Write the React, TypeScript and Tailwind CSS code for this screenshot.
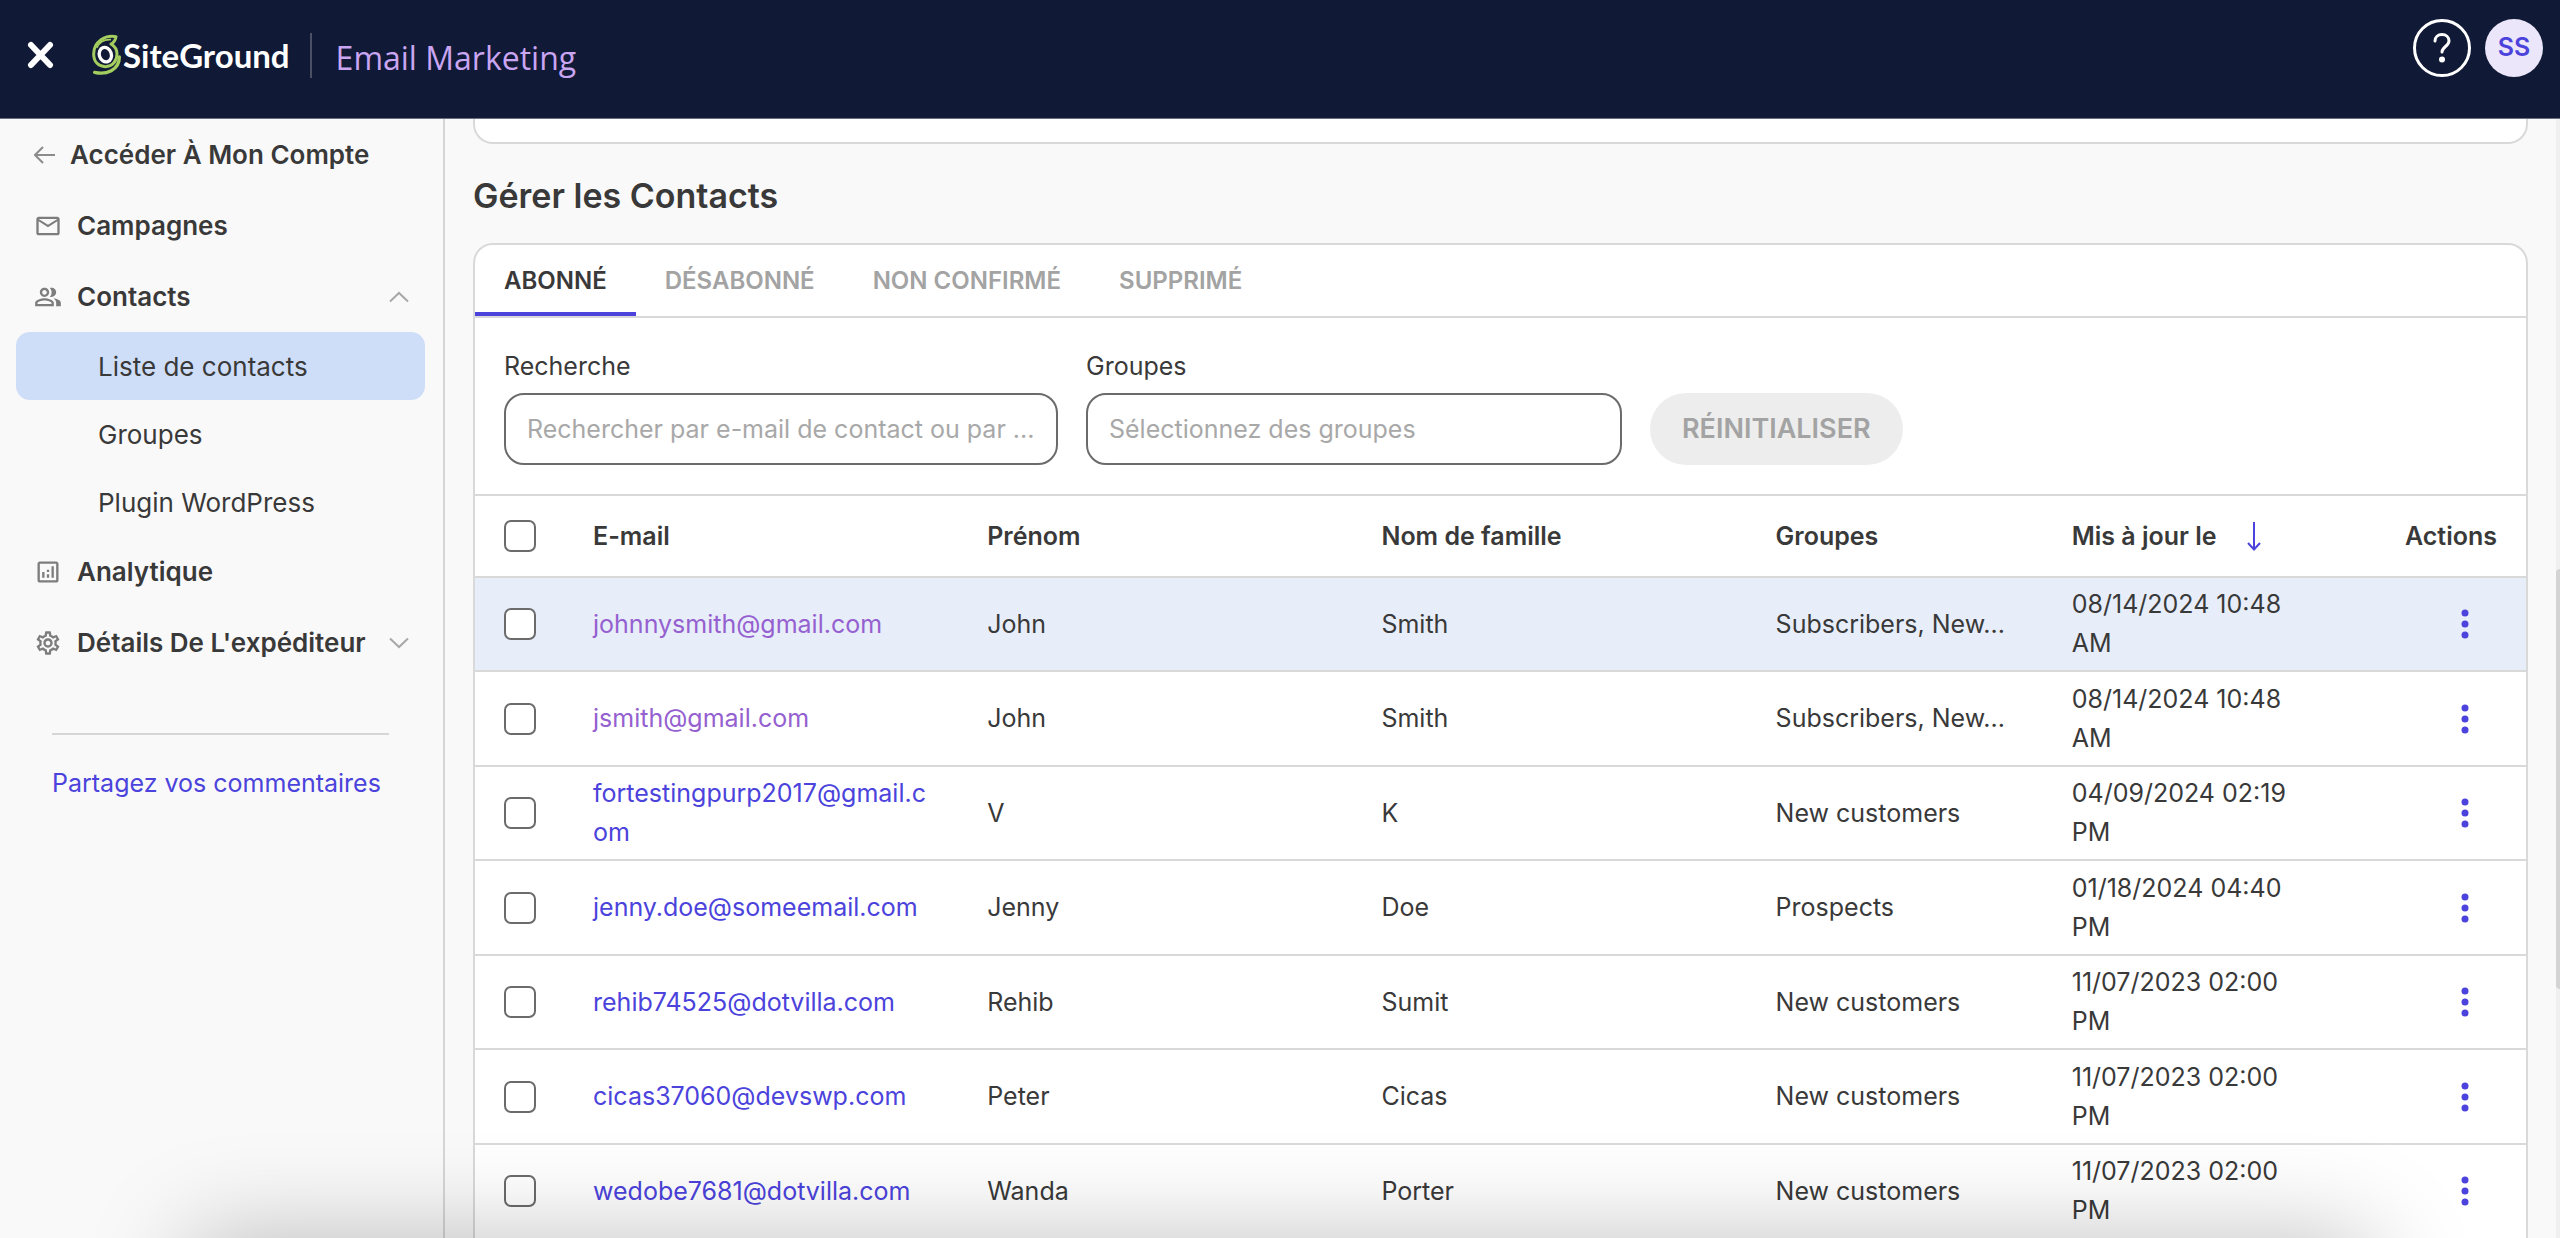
import {
  MdMailOutline,
  MdOutlineAnalytics,
  MdOutlinePeopleAlt,
  MdOutlineSettings,
} from 'react-icons/md';

type Contact = {
  email: string;
  first: string;
  last: string;
  groups: string;
  updated: string;
  visited?: boolean;
};

const contacts: Contact[] = [
  { email: 'johnnysmith@gmail.com', first: 'John', last: 'Smith', groups: 'Subscribers, New...', updated: '08/14/2024 10:48 AM', visited: true },
  { email: 'jsmith@gmail.com', first: 'John', last: 'Smith', groups: 'Subscribers, New...', updated: '08/14/2024 10:48 AM', visited: true },
  { email: 'fortestingpurp2017@gmail.com', first: 'V', last: 'K', groups: 'New customers', updated: '04/09/2024 02:19 PM' },
  { email: 'jenny.doe@someemail.com', first: 'Jenny', last: 'Doe', groups: 'Prospects', updated: '01/18/2024 04:40 PM' },
  { email: 'rehib74525@dotvilla.com', first: 'Rehib', last: 'Sumit', groups: 'New customers', updated: '11/07/2023 02:00 PM' },
  { email: 'cicas37060@devswp.com', first: 'Peter', last: 'Cicas', groups: 'New customers', updated: '11/07/2023 02:00 PM' },
  { email: 'wedobe7681@dotvilla.com', first: 'Wanda', last: 'Porter', groups: 'New customers', updated: '11/07/2023 02:00 PM' },
];

const tabs = ['ABONNÉ', 'DÉSABONNÉ', 'NON CONFIRMÉ', 'SUPPRIMÉ'];

function Chevron({ up }: { up?: boolean }) {
  return (
    <svg width="20" height="12" viewBox="0 0 20 12" fill="none" stroke="#a8a8a8" strokeWidth="2" aria-hidden>
      <path d={up ? 'M1 10.5 10 2l9 8.5' : 'M1 1.5 10 10l9-8.5'} />
    </svg>
  );
}

function Swirl() {
  return (
    <svg width="30" height="42" viewBox="0 0 90 126" fill="none" strokeLinecap="round" strokeLinejoin="round" aria-hidden>
      <path d="M75 8C42 2 8 24 8 60c0 24 15 38 35 38 22 0 35-18 35-38 0-14-8-24-18-30 8-4 13-11 15-22Z" stroke="#a4cd5f" strokeWidth="9" />
      <path d="M18 40C26 24 40 16 58 17" stroke="#a4cd5f" strokeWidth="5" />
      <ellipse cx="43" cy="62" rx="18" ry="22" stroke="#fff" strokeWidth="10" transform="rotate(-18 43 62)" />
      <path d="M11 115c34 8 74-6 74-46" stroke="#a4cd5f" strokeWidth="10" />
    </svg>
  );
}

function Header() {
  return (
    <header className="flex h-[119px] shrink-0 items-start justify-between border-b border-[#6b6f7d] bg-[#101936] pr-[17px] pl-[26px]">
      <div className="flex h-[110px] items-center">
        <button aria-label="Fermer" className="mr-[36px]">
          <svg width="29" height="28" viewBox="0 0 29 28" stroke="#fff" strokeWidth="6" strokeLinecap="round" aria-hidden>
            <path d="M5 4l19 20M24 4 5 24" />
          </svg>
        </button>
        <a href="#" className="flex items-center gap-[2px] font-['Lato'] text-[33px] leading-[42px] font-bold text-white">
          <Swirl />
          SiteGround
        </a>
        <div className="mr-[24px] ml-[20px] h-[45px] w-[2px] bg-[#4b5064]" />
        <span className="pt-[6px] font-['Open_Sans'] text-[32px] leading-[44px] text-[#c9a5f2]">Email Marketing</span>
      </div>
      <div className="flex gap-[14px] pt-[19px]">
        <button aria-label="Aide" className="flex size-[58px] items-center justify-center rounded-full border-[3px] border-white">
          <svg width="18" height="30" viewBox="0 0 18 30" fill="none" stroke="#fff" strokeWidth="3" strokeLinecap="round" aria-hidden>
            <path d="M2 8c0-4 3-6.500 7-6.500s7 2.500 7 6.500c0 5-7 6-7 11" />
            <circle cx="9" cy="26.500" r="3" fill="#fff" stroke="none" />
          </svg>
        </button>
        <button className="size-[58px] rounded-full bg-[#ebe6fa] text-[25px] font-semibold text-[#4b43dc]">SS</button>
      </div>
    </header>
  );
}

function Sidebar() {
  const item = 'flex h-[71px] w-full items-center gap-[15px] pl-[18px] pr-[16px] text-[26px] font-semibold';
  const sub = 'flex h-[68px] items-center rounded-[14px] pl-[82px] text-[26px]';
  return (
    <nav className="w-[445px] shrink-0 border-r-2 border-[#d6d6d6] pr-[18px] pl-4">
      <a href="#" className={item}>
        <svg width="21" height="18" viewBox="0 0 21 18" fill="none" stroke="#8c8c8c" strokeWidth="2" aria-hidden>
          <path d="M21 9H1M9 1 1 9l8 8" />
        </svg>
        Accéder À Mon Compte
      </a>
      <a href="#" className={item}>
        <MdMailOutline className="size-[28px] text-[#7d7d7d]" />
        Campagnes
      </a>
      <button className={item}>
        <MdOutlinePeopleAlt className="size-[28px] text-[#7d7d7d]" />
        <span className="grow text-left">Contacts</span>
        <Chevron up />
      </button>
      <div>
        <a href="#" className={sub + ' bg-[#cfdef8]'}>Liste de contacts</a>
        <a href="#" className={sub}>Groupes</a>
        <a href="#" className={sub}>Plugin WordPress</a>
      </div>
      <a href="#" className={item}>
        <MdOutlineAnalytics className="size-[28px] text-[#7d7d7d]" />
        Analytique
      </a>
      <button className={item}>
        <MdOutlineSettings className="size-[28px] text-[#7d7d7d]" />
        <span className="grow text-left">Détails De L'expéditeur</span>
        <Chevron />
      </button>
      <hr className="mt-[55px] mr-[36px] ml-[36px] border-t-2 border-[#d6d6d6]" />
      <a href="#" className="mt-[29px] ml-[36px] block text-[25px] leading-[39px] text-[#4b43dc]">Partagez vos commentaires</a>
    </nav>
  );
}

function CheckBox({ label }: { label: string }) {
  return (
    <input
      type="checkbox"
      aria-label={label}
      className="block size-[32px] appearance-none rounded-[7px] border-2 border-[#6b6b6b] bg-white"
    />
  );
}

function ContactTable() {
  const th = 'border-t-2 border-[#d9d9d9] px-[29px] py-0 text-left font-semibold';
  const td = 'border-t-2 border-[#d9d9d9] px-[29px] py-0';
  return (
    <table className="w-full table-fixed border-separate border-spacing-0 text-[25px] leading-[39px]">
      <colgroup>
        <col className="w-[89px]" />
        <col className="w-[394px]" />
        <col className="w-[394px]" />
        <col className="w-[394px]" />
        <col className="w-[296px]" />
        <col className="w-[296px]" />
        <col className="w-[187px]" />
      </colgroup>
      <thead>
        <tr className="h-[82px]">
          <th className={th}><CheckBox label="Tout sélectionner" /></th>
          <th className={th}>E-mail</th>
          <th className={th}>Prénom</th>
          <th className={th}>Nom de famille</th>
          <th className={th}>Groupes</th>
          <th className={th}>
            <button className="flex items-center gap-[30px] whitespace-nowrap">
              Mis à jour le
              <svg width="14" height="30" viewBox="0 0 14 30" fill="none" stroke="#4b43dc" strokeWidth="2" aria-hidden>
                <path d="M7 1v27M1 22l6 6.500 6-6.500" />
              </svg>
            </button>
          </th>
          <th className={th}><div className="flex justify-end">Actions</div></th>
        </tr>
      </thead>
      <tbody>
        {contacts.map((c, i) => (
          <tr key={c.email} className={i === 0 ? 'h-[94px] bg-[#e8eef9]' : 'h-[95px] odd:h-[94px]'}>
            <td className={td}><CheckBox label={c.email} /></td>
            <td className={td}>
              <a href="#" className={c.visited ? 'break-all text-[#9560d0]' : 'break-all text-[#4b43dc]'}>{c.email}</a>
            </td>
            <td className={td}>{c.first}</td>
            <td className={td}>{c.last}</td>
            <td className={td}>{c.groups}</td>
            <td className={td}>{c.updated}</td>
            <td className={td}>
              <button aria-label="Actions" className="ml-auto flex h-[40px] w-[64px] items-center justify-center">
                <svg width="8" height="30" viewBox="0 0 8 30" fill="#4b43dc" aria-hidden>
                  <circle cx="4" cy="4" r="3.500" />
                  <circle cx="4" cy="15" r="3.500" />
                  <circle cx="4" cy="26" r="3.500" />
                </svg>
              </button>
            </td>
          </tr>
        ))}
      </tbody>
    </table>
  );
}

export default function App() {
  const field = 'h-[72px] rounded-[20px] border-2 border-[#6b6b6b] bg-white px-[21px] placeholder:text-[#a8a8a8]';
  return (
    <div className="relative flex h-screen flex-col overflow-hidden bg-[#f9f9f9] font-['Inter',sans-serif] text-[#393939]">
      <Header />
      <div className="flex min-h-0 grow">
        <Sidebar />
        <main className="min-w-0 grow overflow-hidden pr-[32px] pl-[28px]">
          <div className="h-[25px] rounded-b-[20px] border-2 border-t-0 border-[#d9d9d9] bg-white" />
          <h1 className="mt-[31px] mb-[26px] text-[34px] leading-[42px] font-semibold">Gérer les Contacts</h1>
          <section className="overflow-hidden rounded-[20px] border-2 border-[#d9d9d9] bg-white pb-10">
            <div role="tablist" className="flex border-b-2 border-[#d9d9d9]">
              {tabs.map((t, i) => (
                <button
                  key={t}
                  role="tab"
                  aria-selected={i === 0}
                  className={
                    i === 0
                      ? 'h-[71px] border-y-4 border-t-transparent border-b-[#4b43dc] px-[29px] text-[24px] font-semibold'
                      : 'h-[71px] px-[29px] text-[24px] font-semibold text-[#a3a3a3]'
                  }
                >
                  {t}
                </button>
              ))}
            </div>
            <div className="flex items-end gap-[28px] px-[29px] pt-[29px] pb-[29px] text-[25px]">
              <div className="flex w-[554px] flex-col gap-[7px]">
                <label htmlFor="search" className="leading-[39px]">Recherche</label>
                <input id="search" className={field} placeholder="Rechercher par e-mail de contact ou par ..." />
              </div>
              <div className="flex w-[536px] flex-col gap-[7px]">
                <label htmlFor="groups" className="leading-[39px]">Groupes</label>
                <input id="groups" className={field} placeholder="Sélectionnez des groupes" />
              </div>
              <button disabled className="h-[72px] rounded-full bg-[#ededed] px-[32px] text-[27px] font-semibold text-[#a3a3a3]">
                RÉINITIALISER
              </button>
            </div>
            <ContactTable />
          </section>
        </main>
      </div>

      {/* page scrollbar */}
      <div className="absolute top-[119px] right-0 bottom-0 w-[4px] bg-[#f0f0f0]">
        <div className="mt-[450px] h-[420px] rounded-l-full bg-[#d4d4d4]" />
      </div>
      <div className="pointer-events-none absolute top-full right-[190px] left-[190px] h-[200px] shadow-[0_0_100px_rgba(0,0,0,0.25)]" />
    </div>
  );
}
